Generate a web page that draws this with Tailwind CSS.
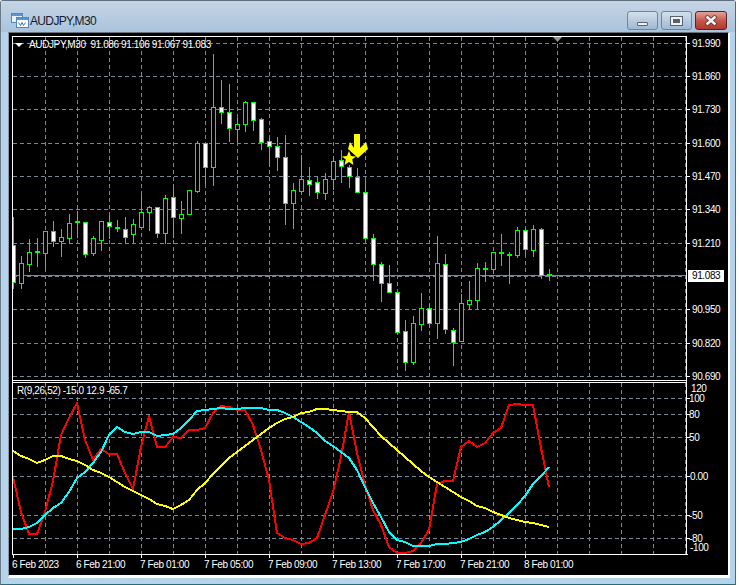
<!DOCTYPE html>
<html lang="en">

<head>
    <meta charset="UTF-8">
    <title>AUDJPY,M30</title>
    <script src="https://cdn.jsdelivr.net/npm/@tailwindcss/browser@4"></script>
</head>

<body class="bg-white overflow-hidden">
    <!-- Window frame -->
    <div class="w-[736px] h-[585px] flex flex-col border border-t-[#5f6f7e] border-l-[#6a7a88] border-r-[#3f6f80] border-b-[#2d6a76] bg-[#b6d3ec] rounded-t-[3px]">
        <!-- Title bar -->
        <div class="h-[31px] shrink-0 bg-gradient-to-b from-[#c6d5e5] to-[#a9c3dd] flex items-start pt-[10px] pl-[10px] pr-[8px]">
            <div class="h-[19px] flex items-center w-full">
                <svg width="18" height="15" viewBox="0 0 18 15" class="shrink-0">
                    <rect x="0.5" y="0.5" width="11" height="9" fill="#eaf3fb" stroke="#4f86c6" />
                    <rect x="1" y="1" width="10" height="2" fill="#5b93d3" />
                    <rect x="5.5" y="4.5" width="12" height="10" fill="#ffffff" stroke="#4f86c6" />
                    <rect x="6" y="5" width="11" height="2" fill="#5b93d3" />
                    <path d="M7.5 9.5 L9.5 12.5 L11 9.5 L12.5 12.5 L14.5 9.5" fill="none" stroke="#3a74b8" />
                </svg>
                <span class="ml-[1px] text-[12px] tracking-[-0.65px] text-[#14202c] font-['Liberation_Sans',sans-serif]">AUDJPY,M30</span>
                <div class="ml-auto flex gap-[3px]">
                    <div class="w-[31px] h-[19px] rounded-[3px] border border-[#6f8599] bg-gradient-to-b from-[#d3e0ec] to-[#9fb9d3] flex items-end justify-center pb-[3px]">
                        <div class="w-[11px] h-[4px] bg-[#eef2f6] border border-[#59636e] rounded-[1px]"></div>
                    </div>
                    <div class="w-[31px] h-[19px] rounded-[3px] border border-[#6f8599] bg-gradient-to-b from-[#d3e0ec] to-[#9fb9d3] flex items-center justify-center">
                        <div class="w-[11px] h-[8px] bg-[#56626e] border-[2px] border-[#eef2f6] outline outline-[#59636e]"></div>
                    </div>
                    <div class="w-[32px] h-[19px] rounded-[3px] border border-[#5e1f2c] bg-gradient-to-b from-[#e0a39a] via-[#c7584a] to-[#b0392b] flex items-center justify-center">
                        <svg width="14" height="11" viewBox="0 0 14 11">
                            <path d="M2 1 L12 10 M12 1 L2 10" stroke="#4a2a2a" stroke-width="4" />
                            <path d="M2.5 1.5 L11.5 9.5 M11.5 1.5 L2.5 9.5" stroke="#f4f4f4" stroke-width="2.6" />
                        </svg>
                    </div>
                </div>
            </div>
        </div>

        <!-- Chart client area -->
        <div class="ml-[7px] w-[722px] h-[546px] shrink-0 bg-black border-t border-l border-t-[#69727c] border-l-[#8d99a5] border-r-2 border-r-white border-b-[3px] border-b-white">
            <svg id="chart" width="719" height="542" viewBox="9 33 719 542" class="block font-['Liberation_Sans',sans-serif] text-[10px] tracking-[-0.38px]"></svg>
        </div>
    </div>

    <script>
        // [x, high, bodyTop, bodyBottom, low, filled]
        const candles = [
            [13, 217, 245, 282, 288, 1], [21, 256, 263, 283, 288, 0], [29, 239, 252, 264, 271, 0], [37, 238, 252, 252, 266, 1],
            [45, 231, 231, 253, 267, 0], [53, 221, 231, 241, 246, 1], [61, 229, 237, 241, 256, 0], [69, 214, 223, 238, 243, 0],
            [77, 211, 222, 222, 237, 1], [85, 222, 222, 254, 257, 1], [93, 236, 238, 253, 255, 0], [101, 221, 221, 240, 250, 0],
            [109, 215, 222, 226, 238, 1], [117, 220, 228, 228, 231, 1], [125, 217, 229, 237, 242, 1], [133, 219, 224, 234, 242, 0],
            [141, 195, 212, 227, 227, 0], [149, 206, 207, 212, 230, 0], [157, 207, 207, 233, 237, 1], [165, 195, 198, 233, 243, 0],
            [173, 185, 197, 217, 237, 1], [181, 201, 214, 218, 233, 0], [189, 190, 190, 214, 214, 0], [197, 141, 143, 191, 192, 0],
            [205, 143, 143, 167, 183, 1], [213, 54, 107, 167, 185, 0], [221, 80, 107, 112, 123, 1], [229, 84, 112, 128, 141, 1],
            [237, 118, 124, 129, 141, 0], [245, 101, 102, 124, 131, 0], [253, 102, 102, 120, 130, 1], [261, 118, 119, 142, 149, 1],
            [269, 138, 141, 146, 165, 1], [277, 137, 146, 157, 170, 1], [285, 135, 157, 203, 224, 1], [293, 183, 190, 203, 228, 0],
            [301, 155, 179, 191, 192, 0], [309, 167, 180, 184, 195, 1], [317, 177, 182, 192, 198, 1], [325, 173, 179, 193, 199, 0],
            [333, 156, 161, 179, 189, 0], [341, 150, 160, 166, 182, 1], [349, 165, 167, 176, 187, 1], [357, 168, 177, 192, 192, 1],
            [365, 180, 192, 238, 239, 1], [373, 234, 238, 264, 280, 1], [381, 262, 264, 283, 301, 1], [389, 265, 283, 292, 292, 1],
            [397, 292, 292, 332, 333, 1], [405, 320, 331, 362, 370, 1], [413, 316, 323, 362, 364, 0], [421, 293, 308, 324, 330, 0],
            [429, 304, 308, 323, 327, 1], [437, 236, 263, 323, 338, 0], [445, 254, 264, 329, 333, 1], [453, 328, 330, 342, 365, 1],
            [461, 294, 303, 341, 341, 0], [469, 281, 300, 304, 309, 0], [477, 263, 268, 300, 308, 0], [485, 262, 269, 269, 281, 1],
            [493, 252, 252, 269, 273, 0], [501, 234, 253, 253, 265, 1], [509, 252, 255, 255, 283, 1], [517, 227, 230, 255, 257, 0],
            [525, 229, 230, 249, 254, 1], [533, 225, 229, 250, 256, 0], [541, 228, 229, 275, 278, 1], [549, 269, 275, 275, 280, 1]
        ];

        // indicator series, one y per candle column (13, 21, 29, ...)
        const red = [477, 512, 534, 534, 512, 481, 435, 418, 403, 440, 460, 449, 454, 454, 473, 489, 447, 416, 447, 447, 437, 438, 430, 430, 428, 413, 406, 407, 410, 410, 425, 450, 480, 533, 538, 540, 544, 543, 538, 515, 492, 457, 412, 453, 485, 510, 525, 547, 553, 553, 551, 543, 530, 484, 481, 481, 447, 441, 447, 443, 433, 428, 405, 404, 405, 405, 448, 487];
        const cyan = [529, 529, 527, 523, 515, 508, 503, 492, 478, 472, 463, 452, 435, 427, 432, 434, 432, 432, 436, 435, 434, 428, 420, 411, 410, 409, 408, 409, 409, 408, 408, 408, 410, 410, 413, 417, 422, 427, 433, 441, 446, 452, 458, 470, 487, 503, 517, 532, 540, 542, 546, 546, 546, 544, 544, 543, 542, 539, 535, 532, 527, 520, 513, 505, 496, 484, 476, 467];
        const yellow = [451, 456, 459, 463, 460, 456, 456, 459, 461, 465, 470, 473, 477, 482, 487, 491, 495, 499, 504, 506, 509, 505, 500, 490, 483, 474, 466, 458, 452, 446, 440, 434, 428, 423, 419, 417, 413, 412, 409, 409, 410, 411, 412, 412, 418, 427, 436, 443, 450, 457, 464, 471, 477, 482, 487, 492, 497, 501, 506, 508, 512, 515, 518, 520, 522, 523, 525, 527];

        const priceLabels = [['91.990', 43], ['91.860', 76], ['91.730', 109], ['91.600', 143], ['91.470', 176], ['91.340', 209], ['91.210', 243], ['90.950', 309], ['90.820', 343], ['90.690', 376]];
        const indicatorLevels = [398, 414, 437, 476, 515, 538];
        const indicatorLabels = [['120', 691, 388], ['100', 689, 398], ['80', 689, 414], ['50', 689, 437], ['0.00', 690, 476], ['-50', 689, 515], ['-80', 689, 538], ['-100', 690, 547]];
        const timeLabels = [['6 Feb 2023', 12], ['6 Feb 21:00', 76], ['7 Feb 01:00', 140], ['7 Feb 05:00', 204], ['7 Feb 09:00', 268], ['7 Feb 13:00', 332], ['7 Feb 17:00', 396], ['7 Feb 21:00', 460], ['8 Feb 01:00', 524]];

        const GRID = '#778899';
        const GREEN = '#00ff00';
        let s = '';

        const hline = (y, x1, x2, color, dash) => `<line x1="${x1}" x2="${x2}" y1="${y + .5}" y2="${y + .5}" stroke="${color}" ${dash ? 'stroke-dasharray="4 3"' : ''} />`;
        const vline = (x, y1, y2, color, dash) => `<line x1="${x + .5}" x2="${x + .5}" y1="${y1}" y2="${y2}" stroke="${color}" ${dash ? 'stroke-dasharray="4 3"' : ''} />`;
        const label = (text, x, cy, fill = '#ffffff') => `<text x="${x}" y="${cy + 4}" fill="${fill}">${text}</text>`;

        // grid
        priceLabels.forEach(([, y]) => s += hline(y, 13, 686, GRID, true));
        s += hline(276, 13, 686, GRID, true);
        indicatorLevels.forEach(y => s += hline(y, 13, 686, GRID, true));
        for (let x = 45; x < 686; x += 32) {
            const sep = x === 125 || x === 509;
            s += vline(x, 37, 380, sep ? '#ffffff' : GRID, true);
            s += vline(x, 383, 554, sep ? '#ffffff' : GRID, true);
        }

        // current price line, under the candles
        s += hline(275, 13, 686, GRID, false);

        // candles
        candles.forEach(([x, high, top, bottom, low, filled]) => {
            s += vline(x, high, low + 1, GREEN, false);
            if (top === bottom) {
                s += `<rect x="${x - 2}" y="${top - 1}" width="5" height="2" fill="${GREEN}" />`;
            } else {
                s += `<rect x="${x - 1.5}" y="${top + .5}" width="4" height="${bottom - top}" fill="${filled ? '#ffffff' : '#000000'}" stroke="${GREEN}" />`;
            }
        });
        // first candle is cut off by the left axis
        s += `<rect x="9" y="37" width="3" height="343" fill="#000000" />`;

        // arrow and star
        s += `<path d="M354 134 L360 134 L360 148 L366 142 L368 149 L358 158 L348 149 L350 142 L354 148 Z" fill="#ffff00" />`;
        s += `<path d="M349 151 L351 156 L356 156.4 L352.2 159.6 L353.5 165 L349 162 L344.5 165 L345.8 159.6 L342 156.4 L347 156 Z" fill="#ffff00" />`;

        // indicator lines
        [[red, '#ff0000'], [cyan, '#00ffff'], [yellow, '#ffff00']].forEach(([ys, color]) => {
            const pts = ys.map((y, i) => `${13 + i * 8},${y}`).join(' ');
            s += `<polyline points="${pts}" fill="none" stroke="${color}" stroke-width="2" stroke-linejoin="round" shape-rendering="crispEdges" />`;
        });

        // frame lines and axes
        s += hline(36, 12, 687, '#ffffff', false);
        s += hline(380, 12, 687, '#ffffff', false);
        s += hline(382, 12, 687, '#ffffff', false);
        s += hline(554, 12, 688, '#ffffff', false);
        s += vline(12, 36, 555, '#ffffff', false);
        s += vline(686, 36, 555, '#ffffff', false);

        // ticks
        priceLabels.forEach(([, y]) => s += hline(y, 686, 690, '#ffffff', false));
        indicatorLevels.forEach(y => s += hline(y, 686, 690, '#ffffff', false));
        [13, 77, 141, 205, 269, 333, 397, 461, 525].forEach(x => s += vline(x, 554, 558, '#ffffff', false));

        // shift marker at the top of the chart
        s += `<path d="M553 37 L562 37 L557.5 42 Z" fill="#8f959c" />`;

        // legends
        s += `<path d="M15 43 L23 43 L19 47 Z" fill="#ffffff" />`;
        s += label('AUDJPY,M30 &#160;91.086 91.106 91.067 91.083', 29, 44);
        s += label('R(9,26,52) -15.0 12.9 -65.7', 17, 390);

        // axis labels
        priceLabels.forEach(([text, y]) => s += label(text, 692, y));
        indicatorLabels.forEach(([text, x, y]) => s += label(text, x, y));
        timeLabels.forEach(([text, x]) => s += label(text, x, 564));

        // current price tag
        s += `<rect x="688" y="270" width="36" height="12" fill="#ffffff" />`;
        s += label('91.083', 692, 275, '#000000');

        document.getElementById('chart').innerHTML = s;
    </script>
</body>

</html>
